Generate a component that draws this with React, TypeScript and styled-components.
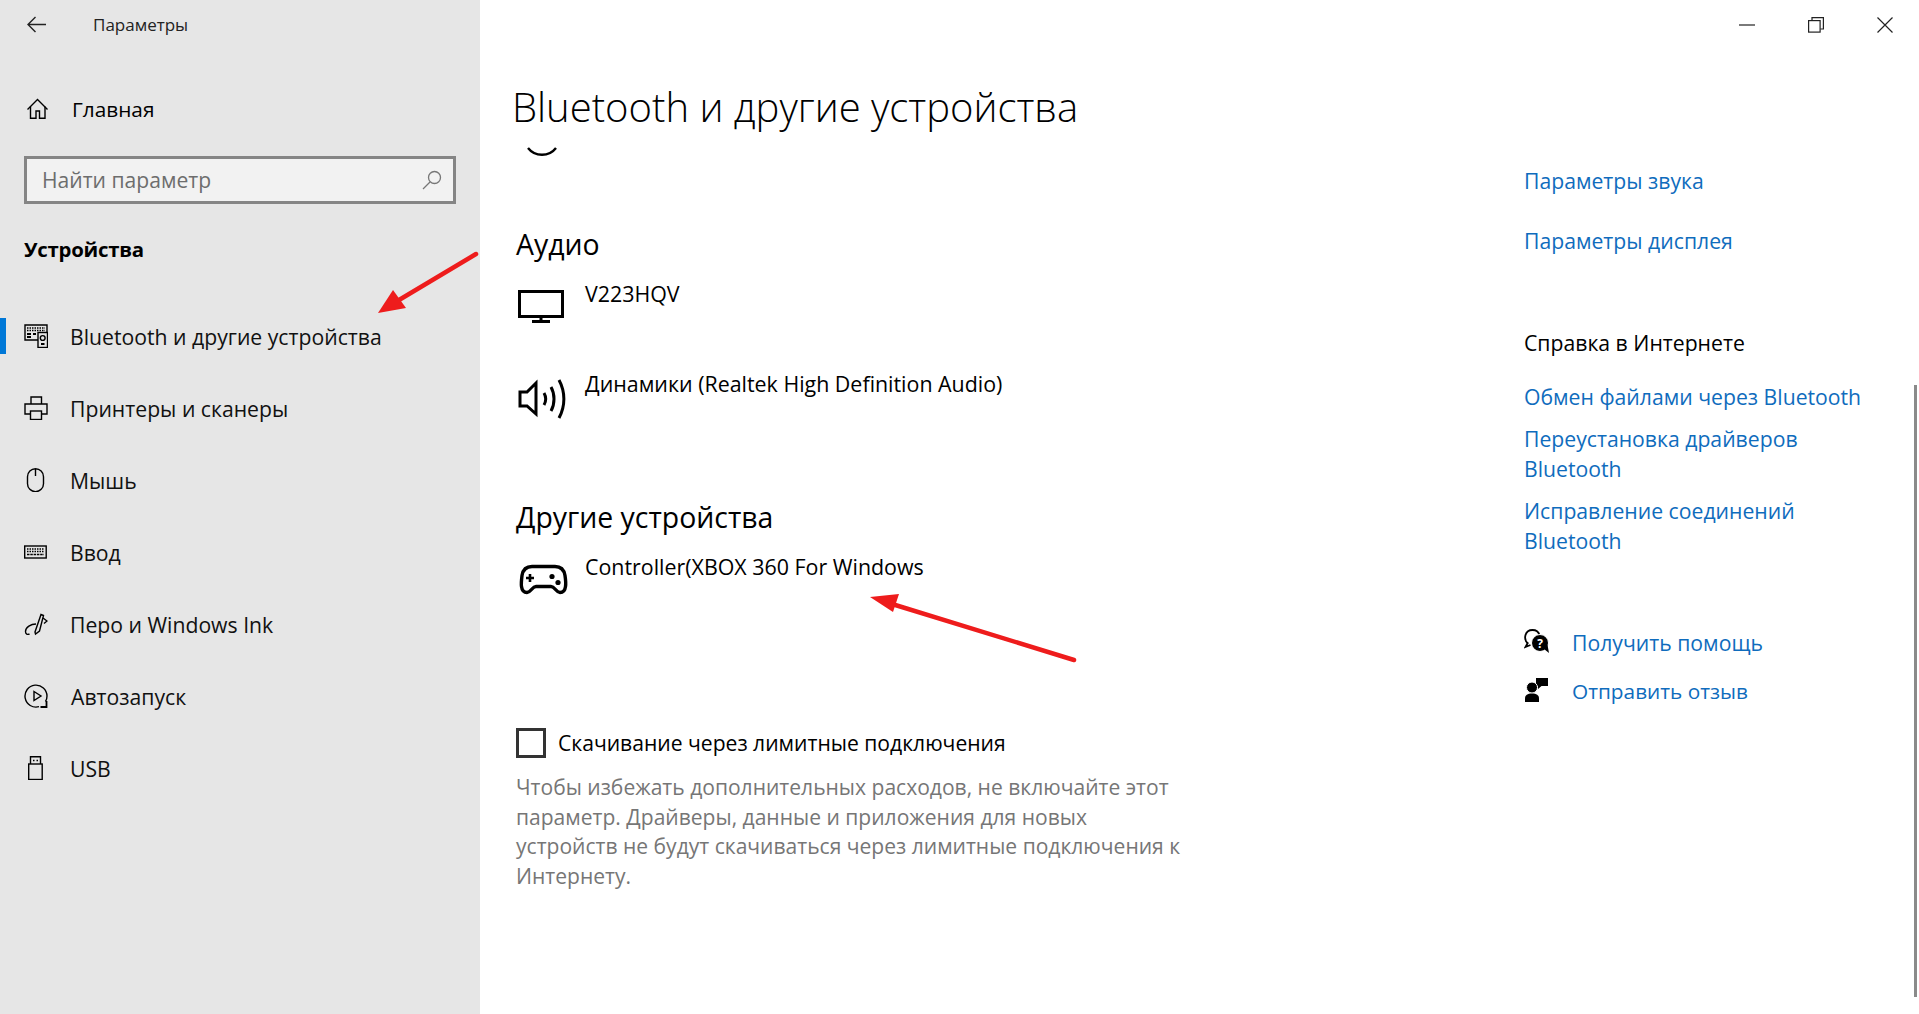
import React from "react";
import styled, { createGlobalStyle } from "styled-components";

const GlobalStyle = createGlobalStyle`
    html, body {
        margin: 0;
        padding: 0;
        height: 100%;
        background: #ffffff;
        overflow: hidden;
    }
    body {
        font-family: "Open Sans", "Noto Sans", "Liberation Sans", sans-serif;
        color: #000000;
    }
`;

const IconFrame = ({ children }: { children: React.ReactNode }) => (
    <svg width="24" height="24" viewBox="0 0 24 24" fill="none" stroke="#000" strokeWidth="1.4">
        {children}
    </svg>
);

const navItems = [
    {
        label: "Bluetooth и другие устройства",
        active: true,
        icon: (
            <IconFrame>
                <path d="M14 16H1V1h22v7" />
                <path d="M3 4h18M3 6.500h18" strokeDasharray="1.500 1" />
                <path d="M3 10h4M3 13h4M9 10h3" strokeWidth="1.800" />
                <rect x="14" y="8.500" width="9.500" height="15" fill="#e6e6e6" />
                <circle cx="18.700" cy="14" r="2.400" />
                <path d="M17 20h3.500" strokeWidth="2" />
            </IconFrame>
        ),
    },
    {
        label: "Принтеры и сканеры",
        icon: (
            <IconFrame>
                <path d="M7 8V1h10.500v7" />
                <path d="M6 18H1V8h22v10h-5" />
                <rect x="6.500" y="15" width="11" height="8.500" />
            </IconFrame>
        ),
    },
    {
        label: "Мышь",
        icon: (
            <IconFrame>
                <rect x="3.500" y="0.700" width="16" height="23" rx="8" />
                <path d="M11.500 1v7" />
            </IconFrame>
        ),
    },
    {
        label: "Ввод",
        icon: (
            <IconFrame>
                <rect x="0.700" y="6" width="21.500" height="12" />
                <path d="M3 9h17M3 11.500h17" strokeDasharray="1.500 1" />
                <path d="M3 14.500h17" strokeDasharray="2.500 .8" />
            </IconFrame>
        ),
    },
    {
        label: "Перо и Windows Ink",
        icon: (
            <IconFrame>
                <path d="M11 20L17 2.500l2.500 1L15.500 19l-4 3z" />
                <path d="M19 6l4 3-3 2.500" />
                <path d="M12 12c-5 0-10.500 3-10.500 7.500 0 2.500 2 3.500 4 2.500" />
            </IconFrame>
        ),
    },
    {
        label: "Автозапуск",
        indent: 1,
        icon: (
            <IconFrame>
                <path d="M15 22.700A11 11 0 1 1 23 12c0 2-.5 4-1.500 5.500" />
                <path d="M10 7.500l7 4.500-7 4.500z" />
                <path d="M22.500 17v6h-6" strokeWidth="1.800" />
            </IconFrame>
        ),
    },
    {
        label: "USB",
        icon: (
            <IconFrame>
                <rect x="4.700" y="8" width="13.500" height="15.500" />
                <path d="M6.500 8V0.700h10V8" />
                <path d="M9 4.500h1.500M12.500 4.500H14" />
            </IconFrame>
        ),
    },
];

const helpLinks = [
    "Обмен файлами через Bluetooth",
    "Переустановка драйверов Bluetooth",
    "Исправление соединений Bluetooth",
];

export default function App() {
    return (
        <Window>
            <GlobalStyle />
            <Sidebar>
                <SideHeader>
                    <BackIcon width="19" height="17" viewBox="0 0 19 17" fill="none" stroke="#222" strokeWidth="1.400">
                        <path d="M19 8.500H1M8.500 1L1 8.500 8.500 16" />
                    </BackIcon>
                    <AppName>Параметры</AppName>
                </SideHeader>
                <HomeRow>
                    <IconFrame>
                        <path d="M0.500 12.500L10.500 2.500l10 10" />
                        <path d="M3.500 9.500V21.300h5.500V14h3.500v7.300H18V9.500" />
                    </IconFrame>
                    <HomeLabel>Главная</HomeLabel>
                </HomeRow>
                <SearchBox>
                    <SearchText>Найти параметр</SearchText>
                    <svg width="20" height="20" viewBox="0 0 20 20" fill="none" stroke="#777" strokeWidth="1.300">
                        <circle cx="12.500" cy="7.500" r="6" />
                        <path d="M8 12l-7 7" />
                    </svg>
                </SearchBox>
                <GroupTitle>Устройства</GroupTitle>
                <NavList>
                    {navItems.map((item) => (
                        <NavItem key={item.label} $active={item.active}>
                            <NavIcon>{item.icon}</NavIcon>
                            <NavLabel $indent={item.indent}>{item.label}</NavLabel>
                        </NavItem>
                    ))}
                </NavList>
            </Sidebar>

            <Main>
                <TitleBar>
                    <WindowButton>
                        <svg width="16" height="16" viewBox="0 0 16 16" fill="none" stroke="#222" strokeWidth="1.200">
                            <path d="M0 8h16" />
                        </svg>
                    </WindowButton>
                    <WindowButton>
                        <svg width="16" height="16" viewBox="0 0 16 16" fill="none" stroke="#222" strokeWidth="1.200">
                            <rect x="0.600" y="3.600" width="11.500" height="11.500" />
                            <path d="M4 3.500V0.600h11.400V12h-3" />
                        </svg>
                    </WindowButton>
                    <WindowButton>
                        <svg width="16" height="16" viewBox="0 0 16 16" fill="none" stroke="#222" strokeWidth="1.200">
                            <path d="M0.500 0.500l15 15M15.500 0.500l-15 15" />
                        </svg>
                    </WindowButton>
                </TitleBar>
                <PageTitle>Bluetooth и другие устройства</PageTitle>
                <Body>
                    <DeviceColumn>
                        <ClippedGlyph>
                            <svg width="32" height="10" viewBox="0 0 32 10" fill="none" stroke="#000" strokeWidth="2.400">
                                <path d="M2 1c7 9 21 9 28 0" />
                            </svg>
                        </ClippedGlyph>
                        <SectionTitle>Аудио</SectionTitle>
                        <DeviceRow>
                            <DeviceIcon $top={11}>
                                <svg width="46" height="33" viewBox="0 0 46 33" fill="none" stroke="#000" strokeWidth="3">
                                    <rect x="1.500" y="1.500" width="43" height="25" />
                                    <path d="M23 27v5M14 31.500h18" />
                                </svg>
                            </DeviceIcon>
                            <DeviceName>V223HQV</DeviceName>
                        </DeviceRow>
                        <DeviceRow>
                            <DeviceIcon $top={9}>
                                <svg width="50" height="42" viewBox="0 0 50 42" fill="none" stroke="#000" strokeWidth="3">
                                    <path d="M2 14h7L18 5v31L9 28H2z" />
                                    <path d="M26 15c2 3.500 2 8.500 0 12" />
                                    <path d="M33 9c4 7 4 17 0 24" />
                                    <path d="M41 2c6.500 12 6.500 26 0 38" />
                                </svg>
                            </DeviceIcon>
                            <DeviceName>Динамики (Realtek High Definition Audio)</DeviceName>
                        </DeviceRow>
                        <OtherTitle>Другие устройства</OtherTitle>
                        <DeviceRow>
                            <DeviceIcon $top={11}>
                                <svg width="50" height="34" viewBox="0 0 50 34" fill="none" stroke="#000" strokeWidth="3.400">
                                    <path d="M14 3.500h23c6 0 9 3 10 9 .6 4 1 8 .5 11-.5 4-3 6-5.500 6-4 0-5-6-9-6H18c-4 0-5 6-9 6-2.500 0-5-2-5.500-6-.5-3 0-7 .5-11 1-6 4-9 10-9z" />
                                    <path d="M8 15h8M12 11v8" strokeWidth="2.600" />
                                    <circle cx="34" cy="13.500" r="2.600" fill="#000" stroke="none" />
                                    <circle cx="40" cy="19.500" r="2.600" fill="#000" stroke="none" />
                                </svg>
                            </DeviceIcon>
                            <DeviceName>Controller(XBOX 360 For Windows</DeviceName>
                        </DeviceRow>
                        <MeteredRow>
                            <CheckBox />
                            <MeteredLabel>Скачивание через лимитные подключения</MeteredLabel>
                        </MeteredRow>
                        <MeteredHint>
                            Чтобы избежать дополнительных расходов, не включайте этот параметр. Драйверы, данные и
                            приложения для новых устройств не будут скачиваться через лимитные подключения к Интернету.
                        </MeteredHint>
                    </DeviceColumn>

                    <RelatedColumn>
                        <LinkText>Параметры звука</LinkText>
                        <LinkText>Параметры дисплея</LinkText>
                        <HelpTitle>Справка в Интернете</HelpTitle>
                        <HelpLinks>
                            {helpLinks.map((text) => (
                                <LinkText key={text}>{text}</LinkText>
                            ))}
                        </HelpLinks>
                        <ActionRow $first>
                            <ActionIcon>
                                <svg width="26" height="26" viewBox="0 0 26 26">
                                    <path d="M4 15.500C1 13 .8 9.500 1.500 7 2.500 3.500 5.500 2 8.500 2c3 0 6 1.500 7 5" fill="none" stroke="#000" strokeWidth="1.800" />
                                    <path d="M4 14.500L1.500 19l5-2" fill="none" stroke="#000" strokeWidth="1.800" />
                                    <circle cx="16" cy="15" r="8.500" fill="#000" stroke="#fff" strokeWidth="1" />
                                    <path d="M20 21l5 4-1.500-8z" fill="#000" />
                                    <QuestionMark x="16" y="19.500">?</QuestionMark>
                                </svg>
                            </ActionIcon>
                            <LinkText>Получить помощь</LinkText>
                        </ActionRow>
                        <ActionRow>
                            <ActionIcon>
                                <svg width="26" height="26" viewBox="0 0 26 26" fill="#000">
                                    <path d="M12 2h12v8h-6.500L14 13v-3h-2z" />
                                    <circle cx="8" cy="11.500" r="5.500" stroke="#fff" strokeWidth="1" />
                                    <path d="M1 26v-3.500C1 19 3.500 17.500 8 17.500s7 1.500 7 5V26z" />
                                </svg>
                            </ActionIcon>
                            <ShortLink>Отправить отзыв</ShortLink>
                        </ActionRow>
                    </RelatedColumn>
                </Body>
                <ScrollThumb />
            </Main>

            <Annotation viewBox="0 0 1919 1014" fill="#ee1c1c">
                <path d="M476 254L399 300" stroke="#ee1c1c" strokeWidth="4.500" strokeLinecap="round" />
                <path d="M378 313L393 290L406 308z" />
                <path d="M1074 660L892 604" stroke="#ee1c1c" strokeWidth="4.500" strokeLinecap="round" />
                <path d="M870 597L899 594L893 612z" />
            </Annotation>
        </Window>
    );
}

const Window = styled.div`
    position: relative;
    width: 1919px;
    height: 1014px;
    display: flex;
    overflow: hidden;
    background: #ffffff;
`;

const Sidebar = styled.aside`
    width: 480px;
    flex: none;
    background: #e6e6e6;
    display: flex;
    flex-direction: column;
`;

const SideHeader = styled.div`
    height: 48px;
    display: flex;
    align-items: center;
    padding-left: 27px;
`;

const BackIcon = styled.svg`
    flex: none;
`;

const AppName = styled.span`
    margin-left: 47px;
    font-size: 17px;
    color: #222222;
`;

const HomeRow = styled.div`
    height: 48px;
    margin-top: 37px;
    padding-left: 27px;
    display: flex;
    align-items: center;
`;

const HomeLabel = styled.span`
    margin-left: 21px;
    font-size: 20.8px;
`;

const SearchBox = styled.div`
    box-sizing: border-box;
    width: 432px;
    height: 48px;
    margin: 23px 0 0 24px;
    padding: 0 11px 0 15px;
    border: 3px solid #858585;
    background: #f2f2f2;
    display: flex;
    align-items: center;
    justify-content: space-between;
`;

const SearchText = styled.span`
    margin-bottom: 2px;
    font-size: 21.1px;
    color: #6d6d6d;
`;

const GroupTitle = styled.h2`
    margin: 30px 0 37px 24px;
    font-size: 20.4px;
    line-height: 30px;
    font-weight: 700;
    letter-spacing: -0.25px;
`;

const NavList = styled.nav`
    display: flex;
    flex-direction: column;
`;

const NavItem = styled.div<{ $active?: boolean }>`
    position: relative;
    height: 72px;
    padding-left: 24px;
    display: flex;
    align-items: center;

    &::before {
        content: "";
        display: ${(p) => (p.$active ? "block" : "none")};
        position: absolute;
        left: 0;
        top: 17px;
        width: 6px;
        height: 36px;
        background: #0078d7;
    }
`;

const NavIcon = styled.span`
    width: 46px;
    display: flex;
    margin-top: -2px;
`;

const NavLabel = styled.span<{ $indent?: number }>`
    margin-left: ${(p) => p.$indent ?? 0}px;
    margin-bottom: 2px;
    font-size: 21.2px;
    color: #111111;
`;

const Main = styled.main`
    position: relative;
    flex: 1;
    display: flex;
    flex-direction: column;
`;

const TitleBar = styled.div`
    height: 50px;
    display: flex;
    justify-content: flex-end;
    padding-right: 26px;
    gap: 53px;
    align-items: flex-start;
`;

const WindowButton = styled.span`
    display: flex;
    margin-top: 17px;
`;

const PageTitle = styled.h1`
    margin: 27px 0 0 32px;
    font-size: 40px;
    line-height: 60px;
    font-weight: 300;
`;

const Body = styled.div`
    margin-top: 3px;
    display: flex;
`;

const DeviceColumn = styled.div`
    width: 1008px;
    padding-left: 36px;
    flex: none;
    display: flex;
    flex-direction: column;
`;

const ClippedGlyph = styled.div`
    height: 86px;
    padding-left: 10px;
`;

const SectionTitle = styled.h3`
    margin: 0 0 17px;
    font-size: 28.4px;
    line-height: 36px;
    font-weight: 400;
`;

const OtherTitle = styled(SectionTitle)`
    margin-top: 40px;
`;

const DeviceRow = styled.div`
    height: 90px;
    display: flex;
    align-items: flex-start;
`;

const DeviceIcon = styled.span<{ $top: number }>`
    width: 69px;
    padding-left: 2px;
    box-sizing: border-box;
    margin-top: ${(p) => p.$top}px;
    display: flex;
`;

const DeviceName = styled.span`
    font-size: 21.4px;
    line-height: 30px;
`;

const MeteredRow = styled.div`
    margin-top: 86px;
    display: flex;
    align-items: center;
`;

const CheckBox = styled.span`
    box-sizing: border-box;
    width: 30px;
    height: 30px;
    border: 3px solid #333333;
`;

const MeteredLabel = styled.span`
    margin-left: 12px;
    font-size: 21.1px;
    line-height: 30px;
`;

const MeteredHint = styled.p`
    margin: 15px 0 0;
    width: 672px;
    font-size: 21.05px;
    line-height: 29.5px;
    color: #767676;
`;

const RelatedColumn = styled.div`
    width: 360px;
    padding-top: 26px;
    display: flex;
    flex-direction: column;
    gap: 30px;
`;

const LinkText = styled.span`
    font-size: 21.2px;
    line-height: 30px;
    color: #0f6cbd;
`;

const ShortLink = styled(LinkText)`
    font-size: 20.8px;
`;

const HelpTitle = styled.h3`
    margin: 42px 0 -6px;
    font-size: 21.2px;
    line-height: 30px;
    font-weight: 400;
`;

const HelpLinks = styled.div`
    display: flex;
    flex-direction: column;
    gap: 12px;
    width: 345px;
    margin-bottom: 42px;
`;

const ActionRow = styled.div<{ $first?: boolean }>`
    display: flex;
    align-items: flex-start;
    margin-top: ${(p) => (p.$first ? 0 : -12)}px;
`;

const ActionIcon = styled.span`
    width: 48px;
    display: flex;
`;

const QuestionMark = styled.text`
    font-family: "Open Sans", sans-serif;
    font-size: 12px;
    font-weight: 700;
    text-anchor: middle;
    fill: #ffffff;
`;

const ScrollThumb = styled.div`
    position: absolute;
    right: 2px;
    top: 385px;
    width: 3px;
    height: 612px;
    background: #8a8a8a;
`;

const Annotation = styled.svg`
    position: absolute;
    inset: 0;
    width: 1919px;
    height: 1014px;
    pointer-events: none;
`;
